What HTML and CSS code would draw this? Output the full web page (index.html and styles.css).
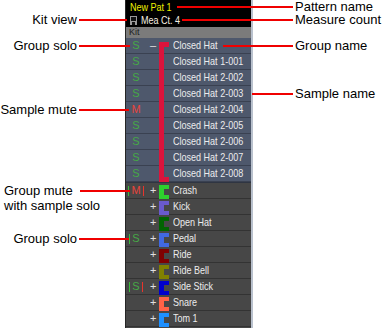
FILE: index.html
```html
<!DOCTYPE html>
<html lang="en">

<head>
    <meta name="viewport" content="width=device-width, initial-scale=1.0">
    <title>Kit view</title>
    <link rel="stylesheet" href="styles.css">
</head>
<body>

    <div class="stage">

        <!-- Kit panel -->
        <div class="kit-panel">
            <div class="pattern-head">
                <div class="pattern-name"><span class="narrow">New Pat 1</span></div>
                <div class="measure">
                    <svg class="view-icon" width="7" height="9" viewBox="0 0 7 9">
                        <rect x="0" y="0" width="7" height="9" fill="#9a9a9a"/>
                        <rect x="1" y="1" width="5" height="4" fill="#111"/>
                        <rect x="2" y="6" width="3" height="3" fill="#111"/>
                    </svg>
                    <span class="narrow">Mea Ct. 4</span>
                </div>
            </div>
            <div class="kit-bar">Kit</div>

            <!-- Expanded group -->
            <div class="group open">
                <span class="bracket crimson"></span>
                <div class="row">
                    <span class="solo"><span class="s">S</span></span>
                    <span class="toggle">&ndash;</span>
                    <span class="swatch"></span>
                    <span class="name">Closed Hat</span>
                </div>
                <div class="row">
                    <span class="solo"><span class="s">S</span></span>
                    <span class="toggle"></span>
                    <span class="swatch"></span>
                    <span class="name">Closed Hat 1-001</span>
                </div>
                <div class="row">
                    <span class="solo"><span class="s">S</span></span>
                    <span class="toggle"></span>
                    <span class="swatch"></span>
                    <span class="name">Closed Hat 2-002</span>
                </div>
                <div class="row">
                    <span class="solo"><span class="s">S</span></span>
                    <span class="toggle"></span>
                    <span class="swatch"></span>
                    <span class="name">Closed Hat 2-003</span>
                </div>
                <div class="row">
                    <span class="solo"><span class="m">M</span></span>
                    <span class="toggle"></span>
                    <span class="swatch"></span>
                    <span class="name">Closed Hat 2-004</span>
                </div>
                <div class="row">
                    <span class="solo"><span class="s">S</span></span>
                    <span class="toggle"></span>
                    <span class="swatch"></span>
                    <span class="name">Closed Hat 2-005</span>
                </div>
                <div class="row">
                    <span class="solo"><span class="s">S</span></span>
                    <span class="toggle"></span>
                    <span class="swatch"></span>
                    <span class="name">Closed Hat 2-006</span>
                </div>
                <div class="row">
                    <span class="solo"><span class="s">S</span></span>
                    <span class="toggle"></span>
                    <span class="swatch"></span>
                    <span class="name">Closed Hat 2-007</span>
                </div>
                <div class="row">
                    <span class="solo"><span class="s">S</span></span>
                    <span class="toggle"></span>
                    <span class="swatch"></span>
                    <span class="name">Closed Hat 2-008</span>
                </div>
            </div>

            <!-- Collapsed groups -->
            <div class="row closed">
                <span class="solo"><i class="bar on"></i><span class="m">M</span><i class="bar off"></i></span>
                <span class="toggle">+</span>
                <span class="swatch"><span class="bracket lime"></span></span>
                <span class="name">Crash</span>
            </div>
            <div class="row closed">
                <span class="solo"></span>
                <span class="toggle">+</span>
                <span class="swatch"><span class="bracket slate"></span></span>
                <span class="name">Kick</span>
            </div>
            <div class="row closed">
                <span class="solo"></span>
                <span class="toggle">+</span>
                <span class="swatch"><span class="bracket forest"></span></span>
                <span class="name">Open Hat</span>
            </div>
            <div class="row closed">
                <span class="solo"><i class="bar on"></i><span class="s">S</span><i class="bar hidden"></i></span>
                <span class="toggle">+</span>
                <span class="swatch"><span class="bracket royal"></span></span>
                <span class="name">Pedal</span>
            </div>
            <div class="row closed">
                <span class="solo"></span>
                <span class="toggle">+</span>
                <span class="swatch"><span class="bracket maroon"></span></span>
                <span class="name">Ride</span>
            </div>
            <div class="row closed">
                <span class="solo"></span>
                <span class="toggle">+</span>
                <span class="swatch"><span class="bracket olive"></span></span>
                <span class="name">Ride Bell</span>
            </div>
            <div class="row closed">
                <span class="solo"><i class="bar on"></i><span class="s">S</span><i class="bar off"></i></span>
                <span class="toggle">+</span>
                <span class="swatch"><span class="bracket navy"></span></span>
                <span class="name">Side Stick</span>
            </div>
            <div class="row closed">
                <span class="solo"></span>
                <span class="toggle">+</span>
                <span class="swatch"><span class="bracket tomato"></span></span>
                <span class="name">Snare</span>
            </div>
            <div class="row closed">
                <span class="solo"></span>
                <span class="toggle">+</span>
                <span class="swatch"><span class="bracket dodger"></span></span>
                <span class="name">Tom 1</span>
            </div>
        </div>

        <!-- Callouts -->
        <div class="note note-right at-pattern"><span class="lead"></span><span class="label">Pattern name</span></div>
        <div class="note note-right at-measure"><span class="lead"></span><span class="label">Measure count</span></div>
        <div class="note note-right at-group-name"><span class="lead"></span><span class="label">Group name</span></div>
        <div class="note note-right at-sample-name"><span class="lead"></span><span class="label">Sample name</span></div>

        <div class="note note-left at-kit-view"><span class="label">Kit view</span><span class="lead"></span></div>
        <div class="note note-left at-group-solo"><span class="label">Group solo</span><span class="lead"></span></div>
        <div class="note note-left at-sample-mute"><span class="label">Sample mute</span><span class="lead"></span></div>
        <div class="note note-left at-group-mute"><span class="label">Group mute<br>with sample solo</span><span class="lead"></span></div>
        <div class="note note-left at-group-solo-2"><span class="label">Group solo</span><span class="lead"></span></div>
    </div>

</body>

</html>
```

FILE: styles.css
```css
/* General */
* {
    box-sizing: border-box;
}

body {
    margin: 0;
    background-color: white;
    font-family: "Liberation Sans", Arial, sans-serif;
}

.stage {
    position: relative;
    width: 383px;
    height: 328px;
    overflow: hidden;
}

/* Kit Panel */
.kit-panel {
    margin-left: 125px;
    width: 128px;
    height: 328px;
    background-color: #474747;
    border-left: 1px solid #262626;
    border-right: 2px solid #b9c1cd;
    font-family: "Liberation Sans", Arial, sans-serif;
    font-size: 11px;
    line-height: 15px;
    color: #ececec;
}

/* the app uses a narrow UI face, squeeze Liberation Sans to its width */
.narrow,
.name {
    display: inline-block;
    white-space: nowrap;
    transform: scaleX(0.82);
    transform-origin: 0 50%;
}

.pattern-head {
    height: 27px;
    padding: 1px 0 0 4px;
    background-color: black;
    line-height: 13px;
}

.pattern-name {
    color: #eef000;
}

.measure {
    display: flex;
    align-items: center;
    gap: 4px;
    color: #f5efe0;
}

.view-icon {
    display: block;
    flex: none;
}

.kit-bar {
    height: 11px;
    padding-left: 3px;
    background-color: #7b7b7b;
    color: #1e1e1e;
    font-size: 9px;
    line-height: 11px;
}

/* Groups and Rows */
.group {
    position: relative;
    background-color: #4e586c;
    border-bottom: 1px solid #2f3542;
}

.row {
    display: flex;
    height: 16px;
    border-bottom: 1px solid #3a4151;
}

.row.closed {
    background-color: #474747;
    border-bottom-color: #333333;
}

.solo {
    display: flex;
    flex: none;
    justify-content: center;
    align-items: center;
    gap: 2px;
    width: 20px;
}

.s {
    color: #46a846;
}

.m {
    color: #e8443c;
}

.bar {
    display: inline-block;
    width: 1px;
    height: 10px;
}

.bar.on {
    background-color: #3cb83c;
}

.bar.off {
    background-color: #e8342c;
}

.bar.hidden {
    visibility: hidden;
}

.toggle {
    flex: none;
    width: 12px;
    padding-left: 4px;
    color: #e0e0e0;
}

.swatch {
    position: relative;
    flex: none;
    width: 15px;
}

.name {
    flex: none;
}

/* Color brackets */
.bracket {
    position: absolute;
    left: 1px;
    top: 2px;
    bottom: -1px;
    width: 5px;
    background-color: currentColor;
}

.bracket::before,
.bracket::after {
    content: "";
    position: absolute;
    left: 5px;
    width: 5px;
    height: 4px;
    background-color: currentColor;
}

.bracket::before {
    top: 0;
}

.bracket::after {
    bottom: 0;
}

.group .bracket {
    left: 33px;
    top: 4px;
    bottom: 0;
    z-index: 1;
}

.group .bracket::before,
.group .bracket::after {
    height: 5px;
}

.crimson { color: #dc143c; }
.lime { color: #2ed02e; }
.slate { color: #6a5acd; }
.forest { color: #006400; }
.royal { color: #4169e1; }
.maroon { color: #800000; }
.olive { color: #808000; }
.navy { color: #0000cd; }
.tomato { color: #ff6347; }
.dodger { color: #1e90ff; }

/* Callouts */
.note {
    position: absolute;
    display: flex;
    align-items: center;
    height: 14px;
    font-size: 13px;
    line-height: 12px;
    color: black;
}

.lead {
    flex: 1;
    height: 2px;
    background-color: #f00000;
}

.note-right {
    right: 0;
}

.note-right .label {
    width: 88px;
    margin-left: 2px;
    white-space: nowrap;
}

.note-left {
    left: 0;
}

.note-left .label {
    width: 77px;
    margin-right: 2px;
    text-align: right;
    white-space: nowrap;
}

.at-pattern { top: 0; left: 177px; }
.at-measure { top: 13px; left: 182px; }
.at-group-name { top: 39px; left: 223px; }
.at-sample-name { top: 87px; left: 252px; }

.at-kit-view { top: 13px; right: 256px; }
.at-group-solo { top: 39px; right: 253px; }
.at-sample-mute { top: 103px; right: 254px; }
.at-group-solo-2 { top: 232px; right: 254px; }

.at-group-mute {
    top: 184px;
    right: 253px;
    align-items: flex-start;
}

.at-group-mute .label {
    width: 76px;
    margin-right: 4px;
    padding-left: 4px;
    text-align: left;
    line-height: 14.5px;
}

.at-group-mute .lead {
    margin-top: 6px;
}
```
